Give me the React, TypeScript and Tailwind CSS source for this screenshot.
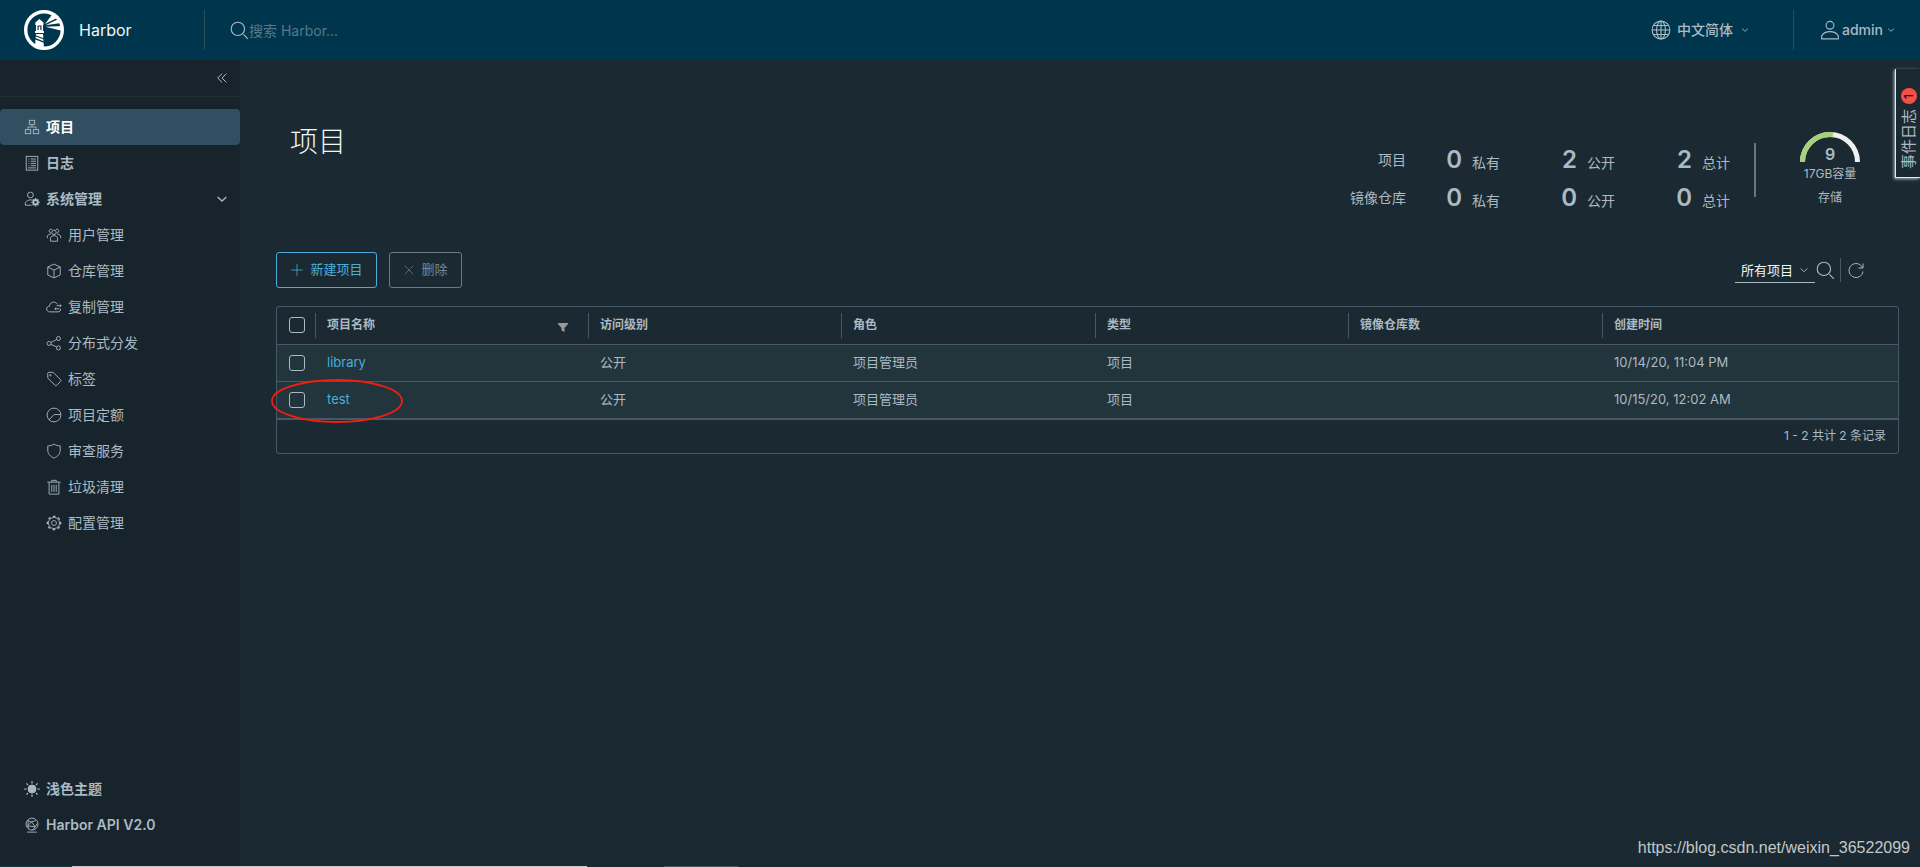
import { useState, type ReactNode } from 'react'
import { clsx } from 'clsx'

// 36x36 line icons, drawn with strokes so they can be scaled freely
const icons: Record<string, ReactNode> = {
  search: (
    <>
      <circle cx="16" cy="16" r="12" />
      <path d="M26 26l8 8" />
    </>
  ),
  world: (
    <>
      <circle cx="18" cy="18" r="16" />
      <ellipse cx="18" cy="18" rx="8" ry="16" />
      <path d="M18 2v32M2 18h32M5 10h26M5 26h26" />
    </>
  ),
  user: (
    <>
      <circle cx="18" cy="9.5" r="7" />
      <path d="M3 34v-5.500C6 23.500 11 21 18 21s12 2.500 15 7.500V34z" />
    </>
  ),
  angle: <path d="M5 12l13 12 13-12" />,
  collapse: <path d="M18 5L5 18l13 13M31 5L18 18l13 13" />,
  organization: (
    <>
      <rect x="12" y="3" width="12" height="9" />
      <rect x="3" y="24" width="12" height="9" />
      <rect x="21" y="24" width="12" height="9" />
      <path d="M18 12v6M9 24v-6h18v6" />
    </>
  ),
  list: (
    <>
      <rect x="5" y="3" width="26" height="31" />
      <path d="M10 9h2M10 14h2M10 19h2M10 24h2M15 9h12M15 14h12M15 19h12M15 24h12M9 29h18" />
    </>
  ),
  administrator: (
    <>
      <circle cx="14.5" cy="9" r="6.5" />
      <path d="M17 32H3v-6c3-4 7-6 11.500-6 1.500 0 3 .3 4 .7" />
      <circle cx="26" cy="25.500" r="5" strokeWidth="4.500" />
      <path d="M26 16v3M26 32v3M16.500 25.500h3M32.500 25.500h3M19.500 19l2 2M30.500 30l2 2M32.500 19l-2 2M19.500 32l2-2" strokeWidth="3" />
    </>
  ),
  users: (
    <>
      <circle cx="18" cy="12" r="5" />
      <path d="M10 32v-8c2-3 4.500-4.500 8-4.500s6 1.500 8 4.500v8z" />
      <path d="M11 13c-5 0-5-8 0-8 1.500 0 2.500.6 3 1.500M25 13c5 0 5-8 0-8-1.500 0-2.500.6-3 1.500M3 25v-5c2-2.500 4-4 8-4M33 25v-5c-2-2.500-4-4-8-4" />
    </>
  ),
  block: (
    <>
      <path d="M18 2.500l14 6.500v18L18 33.500 4 27V9z" />
      <path d="M4 9l14 7 14-7M18 16v17" />
    </>
  ),
  cloud: (
    <>
      <path d="M27 29H8.500C4 29 1.500 26 1.500 22.500S4 16.500 8 16c0-5 4-9 9-9 4 0 7 2 8.500 5M33 22c0 4-2 7-6 7" />
      <path d="M24 15h10M31 12l3 3-3 3M30 22H20M23 19l-3 3 3 3" />
    </>
  ),
  share: (
    <>
      <circle cx="7" cy="19" r="4.500" />
      <circle cx="28" cy="8" r="4.500" />
      <circle cx="28" cy="29" r="4.500" />
      <path d="M11 17l13-7M11 21l13 6" />
    </>
  ),
  tag: (
    <>
      <path d="M4 5c0-1 .5-2 2-2h10l17 17c1 1 1 2 0 3l-9 9.500c-1 1-2 1-3 0L4 16z" />
      <circle cx="10" cy="9.500" r="1.500" />
    </>
  ),
  quota: (
    <>
      <circle cx="18" cy="18" r="15.500" />
      <path d="M7 29l11-12h15" />
    </>
  ),
  shield: <path d="M18 2.500c4 2.500 9 4 14 4V16c0 8-5 14-14 18C9 30 4 24 4 16V6.500c5 0 10-1.500 14-4z" />,
  trash: <path d="M3 7h30M7 7v27h22V7M13 13v16M18 13v16M23 13v16M13 7V3h10v4" />,
  cog: (
    <>
      <circle cx="18" cy="18" r="5.500" />
      <circle cx="18" cy="18" r="12.500" />
      <circle cx="18" cy="18" r="15" strokeWidth="3" strokeDasharray="6 5.780" strokeDashoffset="3" />
    </>
  ),
  sun: (
    <>
      <circle cx="18" cy="18" r="9" fill="currentColor" />
      <path d="M18 0v6M18 30v6M0 18h6M30 18h6M5.500 5.500l3.500 3.500M27 27l3.500 3.500M30.500 5.500L27 9M9 27l-3.500 3.500" strokeWidth="2.500" />
    </>
  ),
  api: (
    <>
      <circle cx="18" cy="16" r="13.500" />
      <path d="M9 8l8 3 9-3M17 11l8 11M17 11L8 20l3 6M8 20l17 2 5-7M25 22l-5 7M9 8v11M7 34h22" />
    </>
  ),
  plus: <path d="M18 3v30M3 18h30" />,
  times: <path d="M5 5l26 26M31 5L5 31" />,
  refresh: <path d="M32 5v9h-9M31 13.500A14 14 0 1 0 32 21" />,
}

function Icon({ name, className }: { name: string; className?: string }) {
  return (
    <svg
      viewBox="0 0 36 36"
      fill="none"
      stroke="currentColor"
      strokeWidth="2"
      className={clsx('shrink-0', className)}
      aria-hidden="true"
    >
      {icons[name]}
    </svg>
  )
}

function Logo() {
  return (
    <svg viewBox="0 0 40 40" className="size-10 shrink-0" aria-hidden="true">
      <circle cx="20" cy="20" r="18.300" fill="none" stroke="#fff" strokeWidth="3.400" />
      {/* Lighthouse */}
      <path fill="#fff" d="M15.300 9l4.200 3.500V15h-.5v6h1v2h-9v-2h1v-6h-.700v-2.500z" />
      <path fill="#00364d" d="M13.500 15.500h4v4.500h-4z" />
      <path fill="#fff" d="M14.700 16.500h1.600V20h-1.600zM12 24h7l1 14.500-9-3z" />
      <path stroke="#00364d" strokeWidth="1.300" d="M11 25.500l9 3.500M11 28.700l9 3.500" />
      {/* Beams */}
      <path fill="#fff" d="M21 14l7.500-10 5.500 3.500zM21.500 15.300L34.500 9l2.500 4zM21.500 16.800l17-.8v5z" />
    </svg>
  )
}

const systemItems = [
  { icon: 'users', label: '用户管理' },
  { icon: 'block', label: '仓库管理' },
  { icon: 'cloud', label: '复制管理' },
  { icon: 'share', label: '分布式分发' },
  { icon: 'tag', label: '标签' },
  { icon: 'quota', label: '项目定额' },
  { icon: 'shield', label: '审查服务' },
  { icon: 'trash', label: '垃圾清理' },
  { icon: 'cog', label: '配置管理' },
]

const stats = [
  { label: '项目', values: [0, 2, 2] },
  { label: '镜像仓库', values: [0, 0, 0] },
]

const statKinds = ['私有', '公开', '总计']

const columns = ['访问级别', '角色', '类型', '镜像仓库数', '创建时间']

const projects = [
  { name: 'library', access: '公开', role: '项目管理员', type: '项目', repos: '', created: '10/14/20, 11:04 PM' },
  { name: 'test', access: '公开', role: '项目管理员', type: '项目', repos: '', created: '10/15/20, 12:02 AM', marked: true },
]

function NavLink({ icon, label, active, child }: { icon: string; label: string; active?: boolean; child?: boolean }) {
  return (
    <a
      href="#"
      className={clsx(
        'flex h-9 items-center gap-1.5 text-sm',
        child ? 'pl-[46px]' : 'pl-6 font-semibold',
        active && 'rounded bg-[#324f61] text-white'
      )}
    >
      <Icon name={icon} className="size-4 text-[#acbac3]" />
      {label}
    </a>
  )
}

function Header() {
  return (
    <header className="flex h-[60px] shrink-0 items-center bg-[#00364d] text-[#acbac3]">
      <a href="#" className="flex w-[204px] items-center gap-[15px] pl-6 text-base text-[#f1f6f8]">
        <Logo />
        Harbor
      </a>
      <label className="flex h-10 flex-1 items-center border-l border-[#27505f] pl-6">
        <Icon name="search" className="size-5" />
        <input
          type="text"
          aria-label="搜索"
          placeholder="搜索 Harbor..."
          className="h-10 w-60 bg-transparent text-sm outline-none placeholder:text-[#557a89]"
        />
      </label>
      <button className="mr-11 flex items-center text-sm font-medium">
        <Icon name="world" className="mr-1.5 size-5" />
        中文简体
        <Icon name="angle" className="ml-2 size-2 stroke-4" />
      </button>
      <button className="flex h-10 items-center border-l border-[#27505f] pr-[25px] pl-[26px] text-sm font-medium">
        <Icon name="user" className="mr-0.5 size-5" />
        admin
        <Icon name="angle" className="ml-1 size-2 stroke-4" />
      </button>
    </header>
  )
}

function Sidebar() {
  const [open, setOpen] = useState(true)

  return (
    <nav className="flex w-60 shrink-0 flex-col bg-[#17242b] pb-6">
      <div className="flex h-[37px] justify-end border-b border-[#223036] pr-3">
        <button aria-label="折叠" className="flex h-9 items-center">
          <Icon name="collapse" className="size-3 stroke-3" />
        </button>
      </div>
      <div className="flex-1 pt-3">
        <NavLink icon="organization" label="项目" active />
        <NavLink icon="list" label="日志" />
        <button
          onClick={() => setOpen(!open)}
          className="flex h-9 w-full items-center gap-1.5 pr-3 pl-6 text-sm font-semibold"
        >
          <Icon name="administrator" className="size-4" />
          系统管理
          <Icon name="angle" className={clsx('ml-auto size-3 stroke-4', !open && '-rotate-90')} />
        </button>
        {open && systemItems.map((item) => <NavLink key={item.label} {...item} child />)}
      </div>
      <NavLink icon="sun" label="浅色主题" />
      <NavLink icon="api" label="Harbor API V2.0" />
    </nav>
  )
}

function Summary() {
  return (
    <div className="flex pt-[72px] pr-[19px]">
      <div className="flex flex-col pt-[9px]">
        {stats.map((row) => (
          <div key={row.label} className="flex h-[38px] items-center text-sm">
            <span className="mr-10 w-20 text-right">{row.label}</span>
            <div className="flex gap-[61px]">
              {row.values.map((value, i) => (
                <span key={statKinds[i]} className="flex w-[54px] items-baseline justify-end gap-2.5">
                  <span className="text-2xl font-semibold">{value}</span>
                  {statKinds[i]}
                </span>
              ))}
            </div>
          </div>
        ))}
      </div>
      <div className="mx-6 mt-[11px] h-[54px] w-0.5 bg-[#6d7679]" />
      <div className="flex w-[100px] flex-col items-center text-xs">
        <div className="relative h-8">
          <svg viewBox="0 0 60 30" className="h-[30px] w-[60px]" fill="none" strokeWidth="5" aria-hidden="true">
            <path d="M2.500 30a27.500 27.500 0 0 1 55 0" stroke="#f0f0f0" />
            <path d="M2.500 30A27.500 27.500 0 0 1 33 2.660" stroke="#a5d179" />
          </svg>
          <span className="absolute inset-x-0 top-3 text-center text-base leading-5 font-semibold">9</span>
        </div>
        <span className="leading-5">17GB容量</span>
        <span className="mt-1 leading-5">存储</span>
      </div>
    </div>
  )
}

function Toolbar() {
  return (
    <div className="flex items-center">
      <button className="flex h-9 w-[101px] items-center justify-center gap-1.5 rounded-[3px] border border-[#49afd9] text-[13px] text-[#49afd9]">
        <Icon name="plus" className="size-3.5" />
        新建项目
      </button>
      <button
        disabled
        className="ml-3 flex h-9 w-[73px] items-center justify-center gap-1.5 rounded-[3px] border border-[#6d7a80] text-[13px] text-[#7a868c]"
      >
        <Icon name="times" className="size-3" />
        删除
      </button>
      <div className="ml-auto flex items-center pr-[34px]">
        <div className="relative border-b border-[#acbac3]">
          <select
            aria-label="项目筛选"
            className="h-6 w-20 appearance-none bg-transparent pl-1.5 text-[13px] text-[#f1f6f8] outline-none"
          >
            <option>所有项目</option>
            <option>私有项目</option>
            <option>公开项目</option>
          </select>
          <Icon name="angle" className="pointer-events-none absolute top-2 right-1.5 size-2.5 stroke-3" />
        </div>
        <button aria-label="搜索" className="pr-[5px]">
          <Icon name="search" className="size-5" />
        </button>
        <button aria-label="刷新" className="flex h-6 items-center border-l border-[#495865] pl-1.5">
          <Icon name="refresh" className="size-[18px]" />
        </button>
      </div>
    </div>
  )
}

const checkboxClass =
  'block size-4 appearance-none rounded-[3px] border border-[#acbac3] checked:bg-[#49afd9]'

function ColumnHead({ children, first }: { children: ReactNode; first?: boolean }) {
  return (
    <th className="h-[37px] p-0">
      <div className="flex h-[25px] items-center justify-between border-l border-[#495865] pr-5 pl-[11px]">
        {children}
        {first && (
          <svg viewBox="0 0 10 9" className="mt-1 h-[9px] w-2.5" fill="#9a9a9a" aria-hidden="true">
            <path d="M0 0h10v1L6.500 5v4l-3-1.500V5L0 1z" />
          </svg>
        )}
      </div>
    </th>
  )
}

function ProjectTable() {
  return (
    <div className="mt-[18px] rounded-[3px] border border-[#495865]">
      <table className="w-full table-fixed border-collapse text-left text-[13px]">
        <colgroup>
          <col className="w-[38px]" />
          <col className="w-[273px]" />
          <col className="w-[253px]" />
          <col className="w-[254px]" />
          <col className="w-[253px]" />
          <col className="w-[254px]" />
          <col />
        </colgroup>
        <thead>
          <tr className="text-xs">
            <th className="p-0 pl-3">
              <input type="checkbox" aria-label="全选" className={checkboxClass} />
            </th>
            <ColumnHead first>项目名称</ColumnHead>
            {columns.map((column) => (
              <ColumnHead key={column}>{column}</ColumnHead>
            ))}
          </tr>
        </thead>
        <tbody>
          {projects.map((project) => (
            <tr key={project.name} className="h-[37px] border-t border-[#495865] bg-[#22343c]">
              <td className="p-0 pl-3">
                <input type="checkbox" aria-label={project.name} className={checkboxClass} />
              </td>
              <td className="relative p-0 pl-3">
                <a href="#" className="text-[#49afd9]">
                  {project.name}
                </a>
                {project.marked && (
                  <svg
                    viewBox="0 0 132 44"
                    className="pointer-events-none absolute -top-[3px] -left-11 h-11 w-[132px]"
                    aria-hidden="true"
                  >
                    <ellipse cx="66" cy="22" rx="65" ry="21" fill="none" stroke="#f51d10" strokeWidth="1.800" />
                  </svg>
                )}
              </td>
              <td className="p-0 pl-3">{project.access}</td>
              <td className="p-0 pl-3">{project.role}</td>
              <td className="p-0 pl-3">{project.type}</td>
              <td className="p-0 pl-3">{project.repos}</td>
              <td className="p-0 pl-3">{project.created}</td>
            </tr>
          ))}
        </tbody>
      </table>
      <div className="flex h-[35px] items-center justify-end border-t-2 border-[#495865] pr-3 pb-0.5 text-xs">
        1 - 2 共计 2 条记录
      </div>
    </div>
  )
}

function EventLog() {
  return (
    <button className="absolute top-[9px] right-0 flex h-[109px] w-[25px] flex-col items-center justify-end gap-[5px] border-b border-l border-[#e6e9ea] pb-2 pl-0.5 text-[15px] shadow-[-1px_1px_3px_#acbac3]">
      <span className="flex size-4 items-center justify-center rounded-full bg-[#f54f47] text-xs leading-4 text-black [writing-mode:sideways-lr]">
        1
      </span>
      <span className="leading-5 [writing-mode:sideways-lr]">事件日志</span>
    </button>
  )
}

export default function App() {
  return (
    <div className="relative flex min-h-screen flex-col bg-[#1b2a32] font-[Inter,'Noto_Sans_CJK_SC',sans-serif] text-[#acbac3]">
      <Header />
      <div className="flex flex-1">
        <Sidebar />
        <main className="relative min-w-0 flex-1 pr-[21px] pl-9">
          <div className="flex h-48 justify-between">
            <h1 className="pt-[62px] pl-3.5 text-[28px] leading-10 font-light text-[#f1f6f8]">项目</h1>
            <Summary />
          </div>
          <Toolbar />
          <ProjectTable />
          <EventLog />
        </main>
      </div>
      <div className="absolute right-2.5 bottom-[7px] font-['Liberation_Sans',Arial,sans-serif] text-base text-[#c3c7c9]">
        https://blog.csdn.net/weixin_36522099
      </div>
      <div className="absolute inset-x-0 bottom-0 flex h-px">
        <div className="w-[72px] bg-[#1c3a48]" />
        <div className="w-[515px] bg-[#c8c8c8]" />
        <div className="ml-[77px] w-[74px] bg-[#495865]" />
      </div>
    </div>
  )
}
